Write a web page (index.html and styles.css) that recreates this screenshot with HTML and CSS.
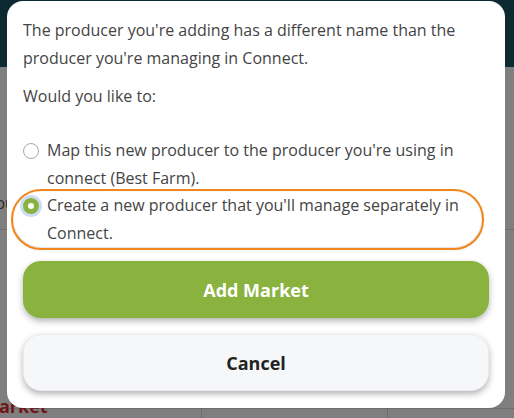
FILE: index.html
```html
<!DOCTYPE html>
<html lang="en">
<head>
<meta charset="utf-8">
<title>Add Market</title>
<link rel="stylesheet" href="styles.css">
</head>
<body>
  <div class="app">
    <header class="topbar"></header>
    <main class="page">
      <div class="row row-account"><span class="bg-label">Account</span></div>
      <div class="row row-mid"></div>
      <div class="table-row">
        <div class="cell cell-first"><span class="market-label">Market</span></div>
        <div class="cell cell-second"></div>
        <div class="cell cell-third"></div>
      </div>
    </main>
  </div>

  <div class="modal" role="dialog">
    <p class="msg">The producer you're adding has a different name than the producer you're managing in Connect.</p>
    <p class="msg question">Would you like to:</p>
    <div class="options">
      <label class="option">
        <span class="radio"></span>
        <span class="option-text">Map this new producer to the producer you're using in connect (Best Farm).</span>
      </label>
      <label class="option selected">
        <span class="radio checked"></span>
        <span class="option-text">Create a new producer that you'll manage separately in Connect.</span>
      </label>
    </div>
    <div class="actions">
      <button class="btn btn-primary">Add Market</button>
      <button class="btn btn-secondary">Cancel</button>
    </div>
  </div>
</body>
</html>
```

FILE: styles.css
```css
* { box-sizing: border-box; }

html, body {
  margin: 0;
  padding: 0;
  width: 514px;
  height: 418px;
  overflow: hidden;
}

body {
  font-family: "Open Sans", "Noto Sans", sans-serif;
  background: #7f7f7f;
  position: relative;
}

.app {
  display: flex;
  flex-direction: column;
  height: 418px;
}

.topbar {
  height: 67px;
  background: #0c2a32;
  flex: none;
}

.page {
  flex: 1;
  background: #7f7f7f;
  display: flex;
  flex-direction: column;
}

.row-account {
  height: 163px;
  border-bottom: 1px solid #6c6c6c;
  display: flex;
  align-items: flex-end;
  padding-bottom: 15px;
}

.bg-label {
  font-size: 16px;
  color: #2a2a2a;
  margin-left: -30px;
}

.row-mid {
  height: 179px;
  border-bottom: 1px solid #6c6c6c;
}

.table-row {
  display: flex;
  flex: 1;
}

.cell {
  height: 100%;
}

.cell-first {
  width: 202px;
  border-right: 1px solid #6c6c6c;
  position: relative;
}

.cell-second {
  width: 186px;
  border-right: 1px solid #6c6c6c;
}

.cell-third {
  flex: 1;
}

.market-label {
  position: absolute;
  left: -18px;
  top: -15px;
  font-size: 18px;
  font-weight: 700;
  color: #6e1717;
}

/* Modal */
.modal {
  position: absolute;
  left: 7px;
  top: 1px;
  width: 498px;
  height: 407px;
  background: #ffffff;
  border-radius: 16px;
  padding: 15px 16px 15px 16px;
  display: flex;
  flex-direction: column;
}

.msg {
  margin: 0;
  font-size: 16px;
  line-height: 28px;
  color: #444444;
}

.question {
  margin-top: 10px;
}

.options {
  margin-top: 27px;
  display: flex;
  flex-direction: column;
}

.option {
  display: flex;
  align-items: flex-start;
  gap: 8px;
  margin-right: 6px;
  border-radius: 27px;
}

.option.selected {
  outline: 2px solid #f0861c;
  outline-offset: 1px;
  margin-left: -9px;
  padding-left: 9px;
  margin-right: 8px;
  box-shadow: 0 2px 4px rgba(0, 0, 0, 0.15);
}

.option-text {
  font-size: 16px;
  line-height: 27.5px;
  color: #444444;
}

.radio {
  flex: none;
  width: 16px;
  height: 16px;
  margin-top: 6px;
  border-radius: 50%;
  border: 1px solid #a9a9a9;
  background: #ffffff;
}

.radio.checked {
  border: 5px solid #89b23e;
  background: #ffffff;
  box-shadow: 0 0 0 3px #cddcf5;
}

.actions {
  margin-top: 14px;
  display: flex;
  flex-direction: column;
  gap: 16px;
}

.btn {
  height: 57px;
  border-radius: 18px;
  font-family: "Open Sans", "Noto Sans", sans-serif;
  font-size: 18px;
  font-weight: 700;
  cursor: pointer;
  box-shadow: 0 3px 6px rgba(0, 0, 0, 0.3);
}

.btn-primary {
  background: #89b23e;
  border: none;
  color: #ffffff;
}

.btn-secondary {
  background: #f6f7f9;
  border: 1px solid #ececf0;
  color: #222222;
}
```
